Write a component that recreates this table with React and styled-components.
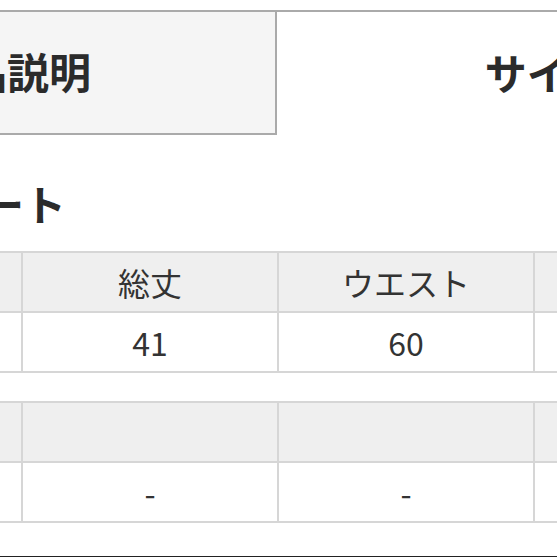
import React from 'react';
import styled, { createGlobalStyle } from 'styled-components';

const GlobalStyle = createGlobalStyle`
  html, body {
    margin: 0;
    padding: 0;
    background: #fff;
    overflow: hidden;
  }
  body {
    font-family: 'Noto Sans CJK JP', 'Noto Sans', sans-serif;
    color: #333;
  }
`;

const Viewport = styled.div`
  width: 557px;
  height: 557px;
  overflow: hidden;
  padding-top: 10px;
  box-sizing: border-box;
`;

const Page = styled.div`
  width: 1078px;
  margin-left: -261px;
`;

const TabBar = styled.div`
  display: flex;
  border-top: 2px solid #aaa;
`;

const Tab = styled.div`
  flex: 0 0 ${props => props.w}px;
  box-sizing: border-box;
  height: 123px;
  display: flex;
  align-items: center;
  justify-content: center;
  font-size: 42px;
  font-weight: 700;
  color: #2b2b2b;
  background: ${props => (props.active ? '#fff' : '#f5f5f5')};
  border-right: ${props => (props.active ? 'none' : '2px solid #aaa')};
  border-bottom: ${props => (props.active ? 'none' : '2px solid #aaa')};
  padding-bottom: 4px;
`;

const Section = styled.section`
  padding-left: 26px;
`;

const Heading = styled.h2`
  margin: 43px 0 23px 133px;
  font-size: 42px;
  font-weight: 700;
  line-height: 50px;
  color: #2b2b2b;
`;

const SizeTable = styled.table`
  border-collapse: collapse;
  table-layout: fixed;
  width: 1024px;
  margin-bottom: ${props => props.gap || 0}px;
`;

const Cell = styled.td`
  width: 254px;
  height: 58px;
  padding: 0;
  border: 2px solid #d6d6d6;
  text-align: center;
  vertical-align: middle;
  font-size: 32px;
  line-height: 58px;
  color: #333;
  background: ${props => (props.head ? '#efefef' : '#fff')};
`;

const FooterLine = styled.div`
  border-top: 2px solid #222;
`;

const tables = [
  { head: ['', '総丈', 'ウエスト', 'ヒップ'], body: ['', '41', '60', '-'] },
  { head: ['', '', '', ''], body: ['', '-', '-', '-'] },
];

const App = () => {
  return (
    <Viewport>
      <GlobalStyle />
      <Page>
        <TabBar>
          <Tab w={538}>商品説明</Tab>
          <Tab w={540} active>サイズ</Tab>
        </TabBar>
        <Section>
          <Heading>スカート</Heading>
          {tables.map((t, i) => (
            <SizeTable key={i} gap={i === 0 ? 28 : 33}>
              <tbody>
                <tr>
                  {t.head.map((h, j) => (
                    <Cell head key={j}>{h}</Cell>
                  ))}
                </tr>
                <tr>
                  {t.body.map((b, j) => (
                    <Cell key={j}>{b}</Cell>
                  ))}
                </tr>
              </tbody>
            </SizeTable>
          ))}
          <FooterLine />
        </Section>
      </Page>
    </Viewport>
  );
};

export default App;
